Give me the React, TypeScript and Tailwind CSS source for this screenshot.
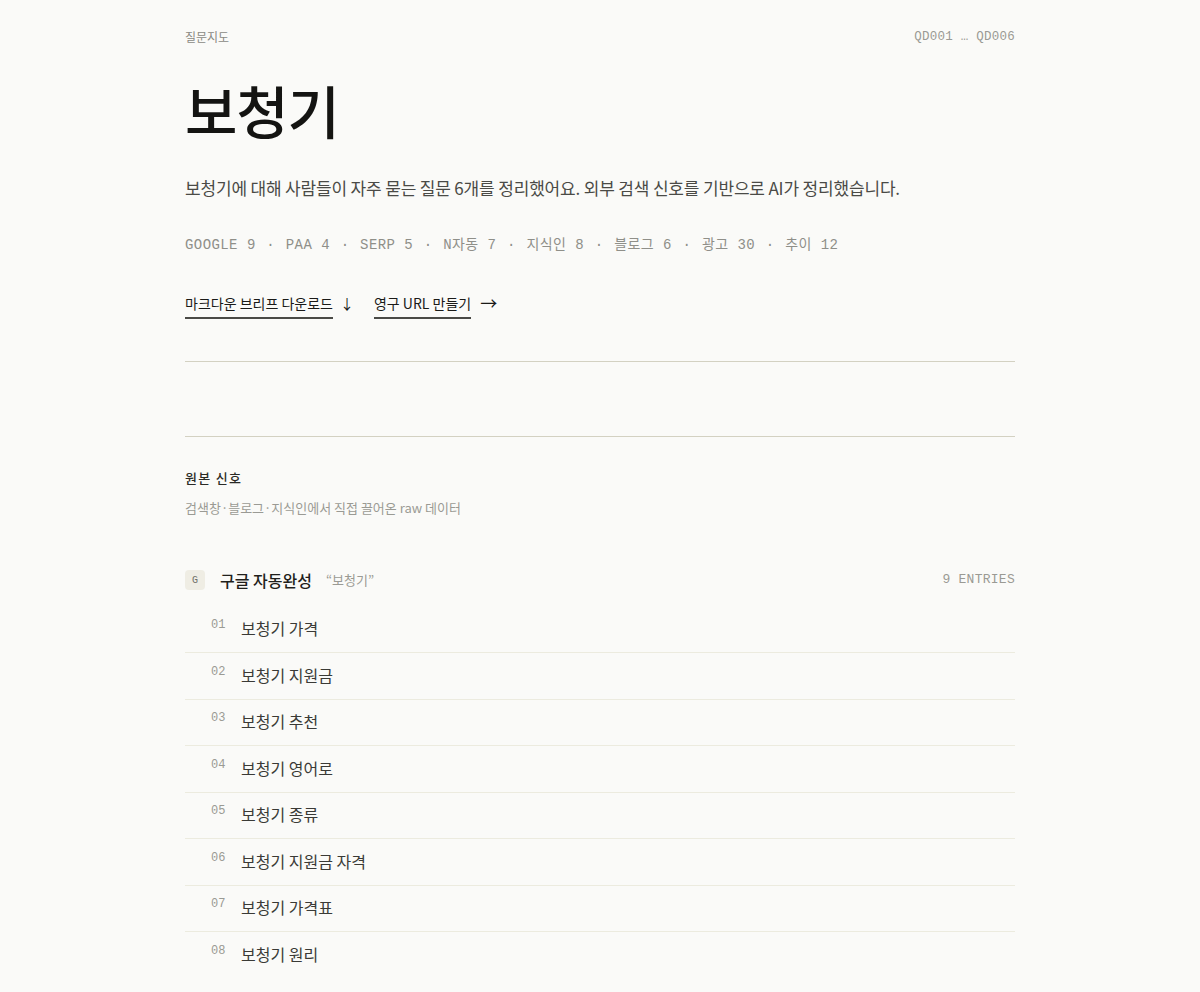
const kr = { fontFamily: '"Noto Sans CJK KR", "Noto Sans", sans-serif' };
const mono = { fontFamily: '"Liberation Mono", "DejaVu Sans Mono", "Noto Sans CJK KR", monospace' };

const stats = [
  ['GOOGLE', 9],
  ['PAA', 4],
  ['SERP', 5],
  ['N자동', 7],
  ['지식인', 8],
  ['블로그', 6],
  ['광고', 30],
  ['추이', 12],
];

const entries = [
  '보청기 가격',
  '보청기 지원금',
  '보청기 추천',
  '보청기 영어로',
  '보청기 종류',
  '보청기 지원금 자격',
  '보청기 가격표',
  '보청기 원리',
];

export default function App() {
  return (
    <div className="min-h-screen bg-[#fafaf8] text-[#1a1a18]" style={kr}>
      <div className="w-[830px] mx-auto pt-[28px] pb-10">
        <div className="flex justify-between items-center h-[18px]">
          <span className="text-[12px] text-[#8a8a84]">질문지도</span>
          <span className="text-[12.5px] text-[#9a9a94] tracking-[0.02em]" style={mono}>QD001 … QD006</span>
        </div>

        <h1 className="mt-[31px] text-[57px] leading-[64px] font-medium tracking-[-0.02em] text-[#141412]">보청기</h1>

        <p className="mt-[33px] text-[17px] leading-[28px] text-[#4a4a46] tracking-[-0.01em]">
          보청기에 대해 사람들이 자주 묻는 질문 6개를 정리했어요. 외부 검색 신호를 기반으로 AI가 정리했습니다.
        </p>

        <div className="mt-[33px] flex items-center text-[14px] leading-[20px] text-[#8f8f89] tracking-[0.03em]" style={mono}>
          {stats.map(([k, v], i) => (
            <span key={k} className="flex items-center">
              {i > 0 && <span className="w-[30px] text-center">·</span>}
              <span>{k}</span>
              <span className="ml-[9px]">{v}</span>
            </span>
          ))}
        </div>

        <div className="mt-[38px] flex items-start gap-[20px] text-[14px] text-[#1a1a18]">
          <span className="flex items-start gap-[7px]">
            <span className="border-b-2 border-[#4a4a46] pb-[4px] leading-[20px]">마크다운 브리프 다운로드</span>
            <span className="leading-[20px]">↓</span>
          </span>
          <span className="flex items-start gap-[9px]">
            <span className="border-b-2 border-[#4a4a46] pb-[4px] leading-[20px]">영구 URL 만들기</span>
            <span className="leading-[20px] text-[17px]">→</span>
          </span>
        </div>

        <div className="mt-[42px] border-t border-[#d3d1c2]" />
        <div className="mt-[74px] border-t border-[#d3d1c2]" />

        <div className="mt-[31px] text-[13px] leading-[20px] font-medium text-[#2a2a26] tracking-[0.1em]">원본 신호</div>
        <div className="mt-[10px] text-[13px] leading-[20px] text-[#9a9a94]">검색창·블로그·지식인에서 직접 끌어온 raw 데이터</div>

        <div className="mt-[50px] flex items-center justify-between h-[24px]">
          <div className="flex items-center">
            <span className="w-[20px] h-[20px] rounded-[4px] bg-[#efede4] flex items-center justify-center text-[10px] text-[#6f6f69]" style={mono}>G</span>
            <span className="ml-[15px] text-[16px] font-medium text-[#1f1f1c]">구글 자동완성</span>
            <span className="ml-[14px] text-[13px] text-[#9a9a94]">“보청기”</span>
          </div>
          <span className="text-[13px] text-[#9a9a94] tracking-[0.02em]" style={mono}>9 ENTRIES</span>
        </div>

        <ul className="mt-[14.5px]">
          {entries.map((e, i) => (
            <li key={e} className="flex items-start pl-[26px] h-[46.5px] pt-[9.5px] border-b border-[#ecebdf] last:border-b-0">
              <span className="w-[30px] text-[12px] leading-[16px] text-[#9a9a94] pt-[1px]" style={mono}>
                {String(i + 1).padStart(2, '0')}
              </span>
              <span className="text-[16px] text-[#3a3a36] leading-[24px]">{e}</span>
            </li>
          ))}
        </ul>
      </div>
    </div>
  );
}
